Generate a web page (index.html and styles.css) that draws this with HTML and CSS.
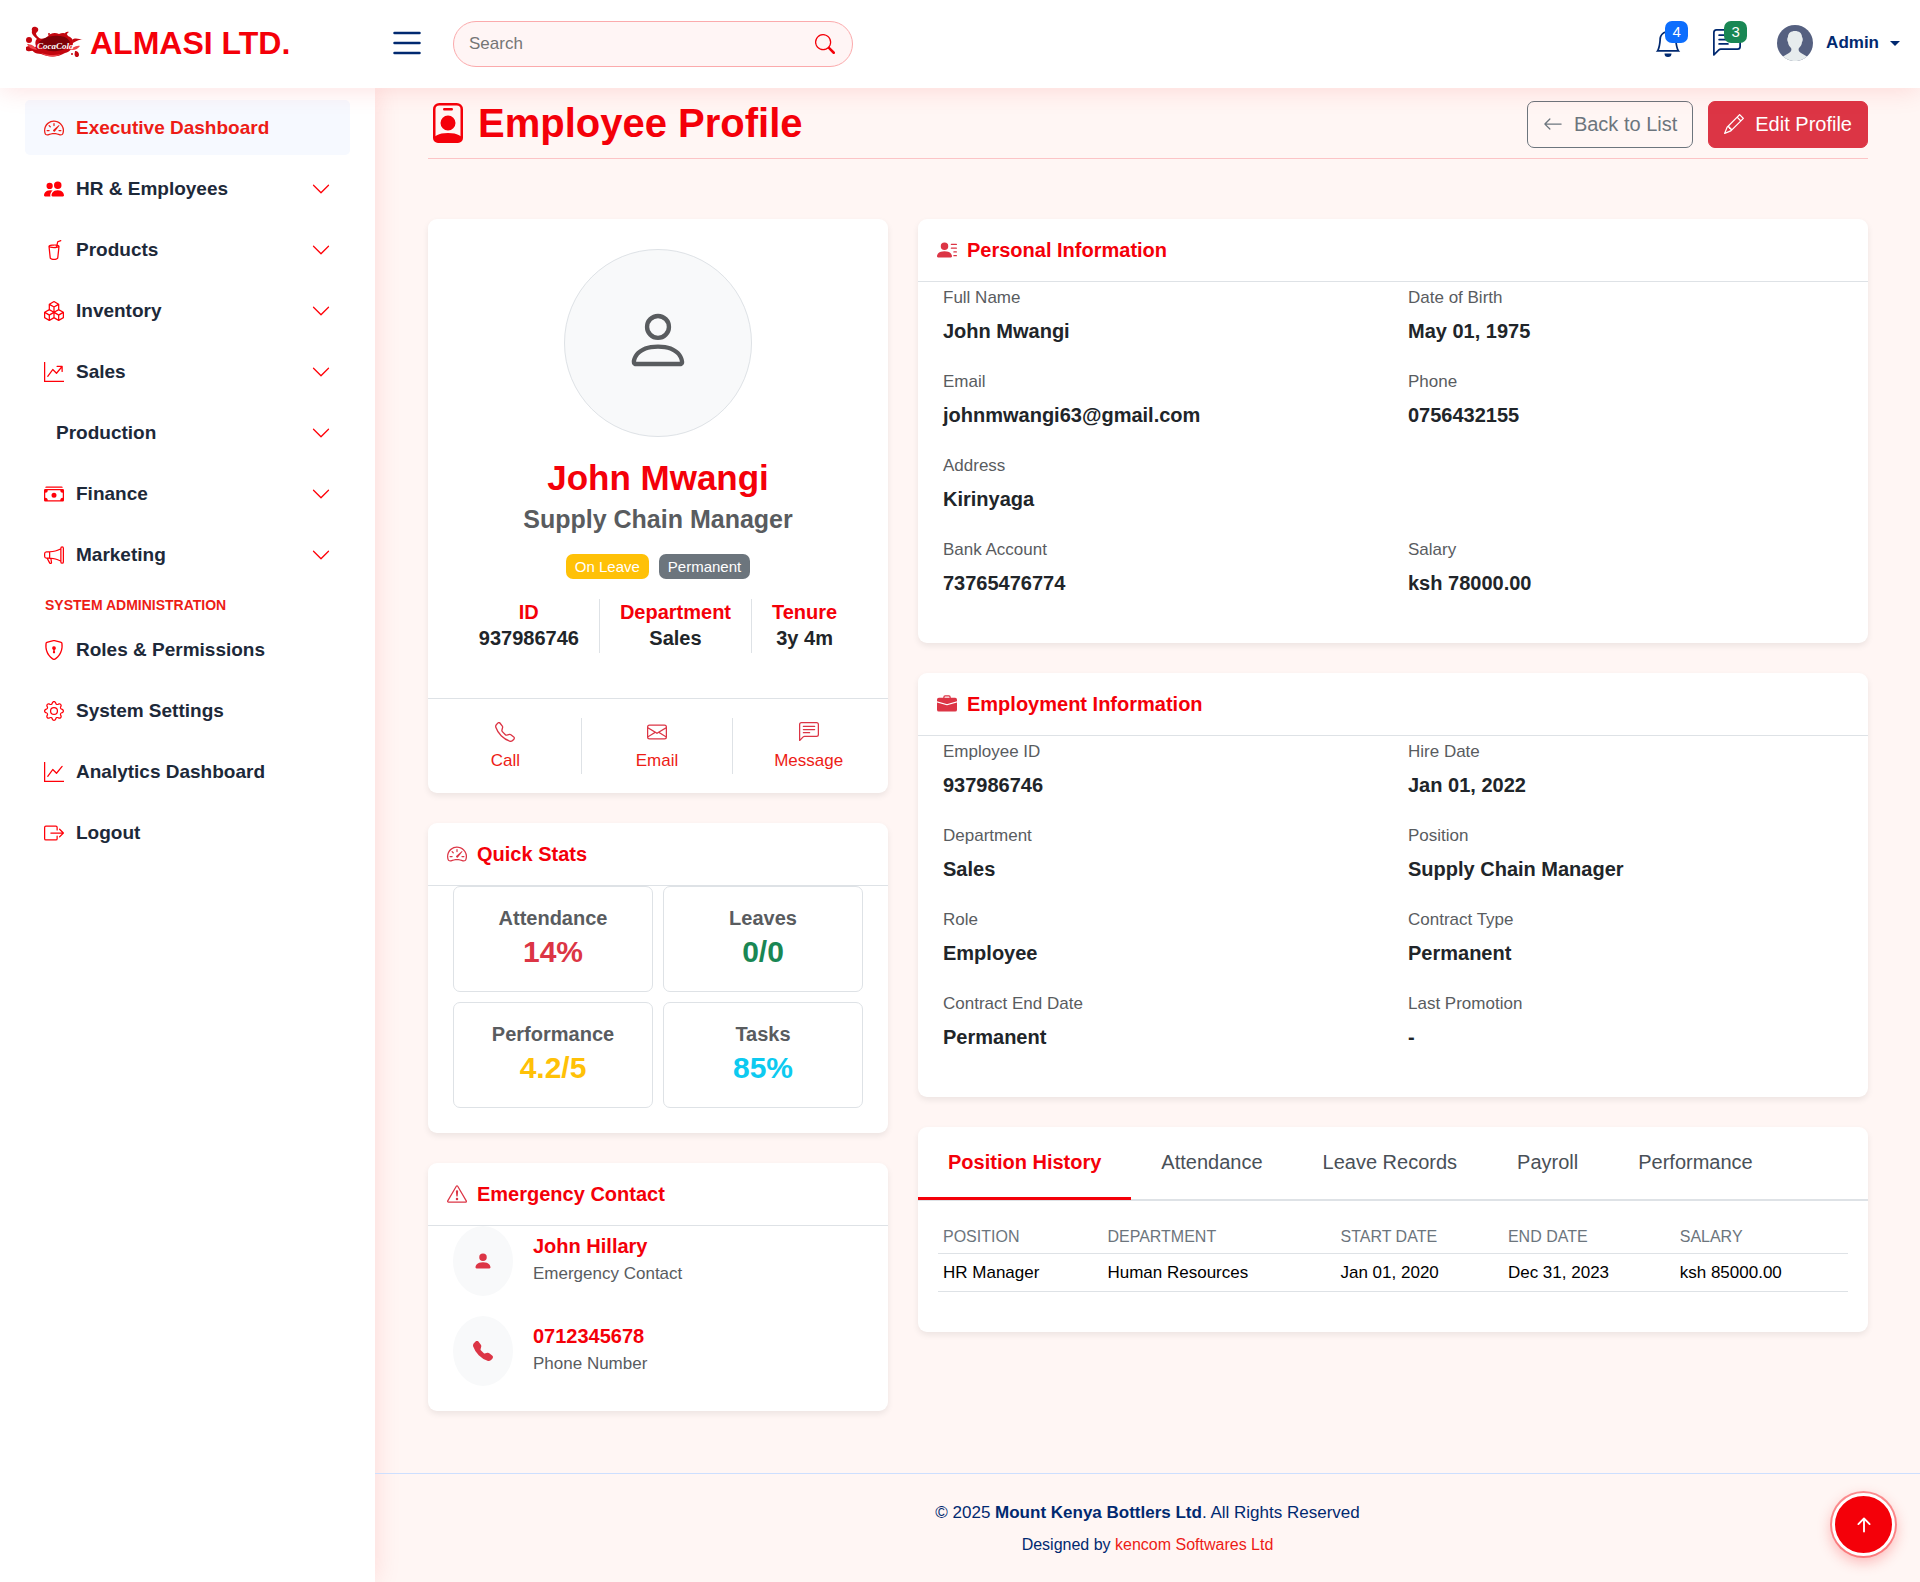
FILE: index.html
```html
<!DOCTYPE html>
<html lang="en">
<head>
<meta charset="utf-8">
<meta name="viewport" content="width=device-width, initial-scale=1">
<title>Employee Profile - Almasi Ltd.</title>
<link rel="stylesheet" href="styles.css">
</head>
<body>
<svg class="sprite" aria-hidden="true">
  <symbol id="speedometer" viewBox="0 0 16 16"><path d="M8 4a.5.5 0 0 1 .5.5V6a.5.5 0 0 1-1 0V4.5A.5.5 0 0 1 8 4M3.732 5.732a.5.5 0 0 1 .707 0l.915.914a.5.5 0 1 1-.708.708l-.914-.915a.5.5 0 0 1 0-.707M2 10a.5.5 0 0 1 .5-.5h1.586a.5.5 0 0 1 0 1H2.5A.5.5 0 0 1 2 10m9.5 0a.5.5 0 0 1 .5-.5h1.5a.5.5 0 0 1 0 1H12a.5.5 0 0 1-.5-.5m.754-4.246a.39.39 0 0 0-.527-.02L7.547 9.31a.91.91 0 1 0 1.302 1.258l3.434-4.297a.39.39 0 0 0-.029-.518z"/><path fill-rule="evenodd" d="M0 10a8 8 0 1 1 15.547 2.661c-.442 1.253-1.845 1.602-2.932 1.25C11.309 13.488 9.475 13 8 13c-1.474 0-3.31.488-4.615.911-1.087.352-2.49.003-2.932-1.25A8 8 0 0 1 0 10m8-7a7 7 0 0 0-6.603 9.329c.203.575.923.876 1.68.63C4.397 12.533 6.358 12 8 12s3.604.532 4.923.96c.757.245 1.477-.056 1.68-.631A7 7 0 0 0 8 3"/></symbol>
  <symbol id="people" viewBox="0 0 16 16"><path d="M7 14s-1 0-1-1 1-4 5-4 5 3 5 4-1 1-1 1zm4-6a3 3 0 1 0 0-6 3 3 0 0 0 0 6m-5.784 6A2.24 2.24 0 0 1 5 13c0-1.355.68-2.75 1.936-3.72A6.3 6.3 0 0 0 5 9c-4 0-5 3-5 4s1 1 1 1zM4.500 8a2.500 2.500 0 1 0 0-5 2.500 2.500 0 0 0 0 5"/></symbol>
  <symbol id="cup" viewBox="0 0 16 16"><path d="M13.902.334a.5.5 0 0 1-.28.65l-2.254.902-.4 1.927c.376.095.715.215.972.367.228.135.56.396.56.82q0 .069-.011.132l-.962 9.068a1.28 1.28 0 0 1-.524.93c-.488.34-1.494.87-3.01.87s-2.522-.53-3.01-.87a1.28 1.28 0 0 1-.524-.93L3.51 5.132A1 1 0 0 1 3.5 5c0-.424.332-.685.56-.82.262-.154.607-.276.99-.372C5.824 3.614 6.867 3.5 8 3.5c.712 0 1.389.045 1.985.127l.464-2.215a.5.5 0 0 1 .303-.356l2.5-1a.5.5 0 0 1 .65.278M9.768 4.607A14 14 0 0 0 8 4.5c-1.076 0-2.033.11-2.707.278A3.3 3.3 0 0 0 4.645 5c.146.073.362.15.648.222C5.967 5.39 6.924 5.5 8 5.5c.571 0 1.109-.03 1.588-.085zm.292 1.756C9.445 6.45 8.742 6.5 8 6.5c-1.133 0-2.176-.114-2.95-.308a6 6 0 0 1-.435-.127l.838 8.03c.013.121.06.186.102.215.357.249 1.168.69 2.438.69s2.081-.441 2.438-.69c.042-.029.09-.094.102-.215l.852-8.03a6 6 0 0 1-.435.127 9 9 0 0 1-.89.17zM11.354 5a3 3 0 0 0-.604-.21l-.099.445.055-.013c.286-.072.502-.149.648-.222"/></symbol>
  <symbol id="boxes" viewBox="0 0 16 16"><path d="M7.752.066a.5.5 0 0 1 .496 0l3.75 2.143a.5.5 0 0 1 .252.434v3.995l3.498 2A.5.5 0 0 1 16 9.07v4.286a.5.5 0 0 1-.252.434l-3.75 2.143a.5.5 0 0 1-.496 0l-3.502-2-3.502 2.001a.5.5 0 0 1-.496 0l-3.75-2.143A.5.5 0 0 1 0 13.357V9.071a.5.5 0 0 1 .252-.434L3.75 6.638V2.643a.5.5 0 0 1 .252-.434zM4.25 7.504 1.508 9.071l2.742 1.567 2.742-1.567zM7.5 9.933l-2.75 1.571v3.134l2.75-1.571zm1 3.134 2.75 1.571v-3.134L8.5 9.933zm.508-3.996 2.742 1.567 2.742-1.567-2.742-1.567zm2.242-2.433V3.504L8.5 5.076V8.21zM7.5 8.21V5.076L4.75 3.504v3.134zM5.258 2.643 8 4.21l2.742-1.567L8 1.076zM15 9.933l-2.75 1.571v3.134L15 13.067zM3.75 14.638v-3.134L1 9.933v3.134z"/></symbol>
  <symbol id="graph-arrow" viewBox="0 0 16 16"><path fill-rule="evenodd" d="M0 0h1v15h15v1H0zm10 3.5a.5.5 0 0 1 .5-.5h4a.5.5 0 0 1 .5.5v4a.5.5 0 0 1-1 0V4.9l-3.613 4.417a.5.5 0 0 1-.74.037L7.06 6.767l-3.656 5.027a.5.5 0 0 1-.808-.588l4-5.5a.5.5 0 0 1 .758-.06l2.609 2.61L13.445 4H10.5a.5.5 0 0 1-.5-.5"/></symbol>
  <symbol id="graph" viewBox="0 0 16 16"><path fill-rule="evenodd" d="M0 0h1v15h15v1H0zm14.817 3.113a.5.5 0 0 1 .07.704l-4.5 5.5a.5.5 0 0 1-.74.037L7.06 6.767l-3.656 5.027a.5.5 0 0 1-.808-.588l4-5.5a.5.5 0 0 1 .758-.06l2.609 2.61 4.15-5.073a.5.5 0 0 1 .704-.07"/></symbol>
  <symbol id="cash" viewBox="0 0 16 16"><path d="M1 3a1 1 0 0 1 1-1h12a1 1 0 0 1 1 1zm7 8a2 2 0 1 0 0-4 2 2 0 0 0 0 4"/><path d="M0 5a1 1 0 0 1 1-1h14a1 1 0 0 1 1 1v8a1 1 0 0 1-1 1H1a1 1 0 0 1-1-1zm3 0a2 2 0 0 1-2 2v4a2 2 0 0 1 2 2h10a2 2 0 0 1 2-2V7a2 2 0 0 1-2-2z"/></symbol>
  <symbol id="megaphone" viewBox="0 0 16 16"><path d="M13 2.5a1.5 1.5 0 0 1 3 0v11a1.5 1.5 0 0 1-3 0v-.214c-2.162-1.241-4.49-1.843-6.912-2.083l.405 2.712A1 1 0 0 1 5.51 15.1h-.548a1 1 0 0 1-.916-.599l-1.85-3.49-.202-.003A2.014 2.014 0 0 1 0 9V7a2.02 2.02 0 0 1 1.992-2.013 75 75 0 0 0 2.483-.075c3.043-.154 6.148-.849 8.525-2.199zm1 0v11a.5.5 0 0 0 1 0v-11a.5.5 0 0 0-1 0m-1 1.35c-2.344 1.205-5.209 1.842-8 2.033v4.233q.27.015.537.036c2.568.189 5.093.744 7.463 1.993zm-9 6.215v-4.13a95 95 0 0 1-1.992.052A1.02 1.02 0 0 0 1 7v2c0 .55.448 1.002 1.006 1.009A61 61 0 0 1 4 10.065m-.657.975 1.609 3.037.01.024h.548l-.002-.014-.443-2.966a68 68 0 0 0-1.722-.082z"/></symbol>
  <symbol id="shield" viewBox="0 0 16 16"><path d="M5.338 1.59a61 61 0 0 0-2.837.856.48.48 0 0 0-.328.39c-.554 4.157.726 7.19 2.253 9.188a10.7 10.7 0 0 0 2.287 2.233c.346.244.652.42.893.533q.18.085.293.118a1 1 0 0 0 .101.025 1 1 0 0 0 .1-.025q.114-.034.294-.118c.24-.113.547-.29.893-.533a10.7 10.7 0 0 0 2.287-2.233c1.527-1.997 2.807-5.031 2.253-9.188a.48.48 0 0 0-.328-.39c-.651-.213-1.75-.56-2.837-.855C9.552 1.29 8.531 1.067 8 1.067c-.53 0-1.552.223-2.662.524zM5.072.56C6.157.265 7.31 0 8 0s1.843.265 2.928.56c1.11.3 2.229.655 2.887.87a1.54 1.54 0 0 1 1.044 1.262c.596 4.477-.787 7.795-2.465 9.99a11.8 11.8 0 0 1-2.517 2.453 7 7 0 0 1-1.048.625c-.28.132-.581.24-.829.24s-.548-.108-.829-.24a7 7 0 0 1-1.048-.625 11.8 11.8 0 0 1-2.517-2.453C1.928 10.487.545 7.169 1.141 2.692A1.54 1.54 0 0 1 2.185 1.43 63 63 0 0 1 5.072.56"/><path d="M9.5 6.5a1.5 1.5 0 0 1-1 1.415l.385 1.99a.5.5 0 0 1-.491.595h-.788a.5.5 0 0 1-.49-.595l.384-1.99a1.5 1.5 0 1 1 2-1.415"/></symbol>
  <symbol id="gear" viewBox="0 0 16 16"><path d="M8 4.754a3.246 3.246 0 1 0 0 6.492 3.246 3.246 0 0 0 0-6.492M5.754 8a2.246 2.246 0 1 1 4.492 0 2.246 2.246 0 0 1-4.492 0"/><path d="M9.796 1.343c-.527-1.79-3.065-1.79-3.592 0l-.094.319a.873.873 0 0 1-1.255.52l-.292-.16c-1.64-.892-3.433.902-2.54 2.541l.159.292a.873.873 0 0 1-.52 1.255l-.319.094c-1.79.527-1.79 3.065 0 3.592l.319.094a.873.873 0 0 1 .52 1.255l-.16.292c-.892 1.64.901 3.434 2.541 2.54l.292-.159a.873.873 0 0 1 1.255.52l.094.319c.527 1.79 3.065 1.79 3.592 0l.094-.319a.873.873 0 0 1 1.255-.52l.292.16c1.64.893 3.434-.902 2.54-2.541l-.159-.292a.873.873 0 0 1 .52-1.255l.319-.094c1.79-.527 1.79-3.065 0-3.592l-.319-.094a.873.873 0 0 1-.52-1.255l.16-.292c.893-1.64-.902-3.433-2.541-2.54l-.292.159a.873.873 0 0 1-1.255-.52zm-2.633.283c.246-.835 1.428-.835 1.674 0l.094.319a1.873 1.873 0 0 0 2.693 1.115l.291-.16c.764-.415 1.6.42 1.184 1.185l-.159.292a1.873 1.873 0 0 0 1.116 2.692l.318.094c.835.246.835 1.428 0 1.674l-.319.094a1.873 1.873 0 0 0-1.115 2.693l.16.291c.415.764-.42 1.6-1.185 1.184l-.291-.159a1.873 1.873 0 0 0-2.693 1.116l-.094.318c-.246.835-1.428.835-1.674 0l-.094-.319a1.873 1.873 0 0 0-2.692-1.115l-.292.16c-.764.415-1.6-.42-1.184-1.185l.159-.291A1.873 1.873 0 0 0 1.945 8.93l-.319-.094c-.835-.246-.835-1.428 0-1.674l.319-.094A1.873 1.873 0 0 0 3.06 4.377l-.16-.292c-.415-.764.42-1.6 1.185-1.184l.292.159a1.873 1.873 0 0 0 2.692-1.115z"/></symbol>
  <symbol id="logout" viewBox="0 0 16 16"><path fill-rule="evenodd" d="M10 12.5a.5.5 0 0 1-.5.5h-8a.5.5 0 0 1-.5-.5v-9a.5.5 0 0 1 .5-.5h8a.5.5 0 0 1 .5.5v2a.5.5 0 0 0 1 0v-2A1.5 1.5 0 0 0 9.5 2h-8A1.5 1.5 0 0 0 0 3.5v9A1.5 1.5 0 0 0 1.5 14h8a1.5 1.5 0 0 0 1.5-1.5v-2a.5.5 0 0 0-1 0z"/><path fill-rule="evenodd" d="M15.854 8.354a.5.5 0 0 0 0-.708l-3-3a.5.5 0 0 0-.708.708L14.293 7.5H5.5a.5.5 0 0 0 0 1h8.793l-2.147 2.146a.5.5 0 0 0 .708.708z"/></symbol>
  <symbol id="chevron" viewBox="0 0 16 16"><path fill-rule="evenodd" d="M1.646 4.646a.5.5 0 0 1 .708 0L8 10.293l5.646-5.647a.5.5 0 0 1 .708.708l-6 6a.5.5 0 0 1-.708 0l-6-6a.5.5 0 0 1 0-.708"/></symbol>
  <symbol id="list" viewBox="0 0 16 16"><path fill-rule="evenodd" d="M2.5 12a.5.5 0 0 1 .5-.5h10a.5.5 0 0 1 0 1H3a.5.5 0 0 1-.5-.5m0-4a.5.5 0 0 1 .5-.5h10a.5.5 0 0 1 0 1H3a.5.5 0 0 1-.5-.5m0-4a.5.5 0 0 1 .5-.5h10a.5.5 0 0 1 0 1H3a.5.5 0 0 1-.5-.5"/></symbol>
  <symbol id="search" viewBox="0 0 16 16"><path d="M11.742 10.344a6.5 6.5 0 1 0-1.397 1.398h-.001q.044.06.098.115l3.85 3.85a1 1 0 0 0 1.415-1.414l-3.85-3.85a1 1 0 0 0-.115-.1zM12 6.5a5.5 5.5 0 1 1-11 0 5.5 5.5 0 0 1 11 0"/></symbol>
  <symbol id="bell" viewBox="0 0 16 16"><path d="M8 16a2 2 0 0 0 2-2H6a2 2 0 0 0 2 2M8 1.918l-.797.161A4 4 0 0 0 4 6c0 .628-.134 2.197-.459 3.742-.16.767-.376 1.566-.663 2.258h10.244c-.287-.692-.502-1.49-.663-2.258C12.134 8.197 12 6.628 12 6a4 4 0 0 0-3.203-3.92zM14.22 12c.223.447.481.801.78 1H1c.299-.199.557-.553.78-1C2.68 10.2 3 6.88 3 6c0-2.42 1.72-4.44 4.005-4.901a1 1 0 1 1 1.99 0A5 5 0 0 1 13 6c0 .88.32 4.2 1.22 6"/></symbol>
  <symbol id="chat" viewBox="0 0 16 16"><path d="M14 1a1 1 0 0 1 1 1v8a1 1 0 0 1-1 1H4.414A2 2 0 0 0 3 11.586l-2 2V2a1 1 0 0 1 1-1zM2 0a2 2 0 0 0-2 2v12.793a.5.5 0 0 0 .854.353l2.853-2.853A1 1 0 0 1 4.414 12H14a2 2 0 0 0 2-2V2a2 2 0 0 0-2-2z"/><path d="M3 3.5a.5.5 0 0 1 .5-.5h9a.5.5 0 0 1 0 1h-9a.5.5 0 0 1-.5-.5M3 6a.5.5 0 0 1 .5-.5h9a.5.5 0 0 1 0 1h-9A.5.5 0 0 1 3 6m0 2.500a.5.5 0 0 1 .5-.5h5a.5.5 0 0 1 0 1h-5a.5.5 0 0 1-.5-.5"/></symbol>
  <symbol id="badge-person" viewBox="0 0 16 16"><path d="M6.5 2a.5.5 0 0 0 0 1h3a.5.5 0 0 0 0-1zM11 8a3 3 0 1 1-6 0 3 3 0 0 1 6 0"/><path d="M4.5 0A2.500 2.500 0 0 0 2 2.500V14a2 2 0 0 0 2 2h8a2 2 0 0 0 2-2V2.500A2.500 2.500 0 0 0 11.500 0zM3 2.500A1.500 1.500 0 0 1 4.500 1h7A1.500 1.500 0 0 1 13 2.500v10.795a4.2 4.2 0 0 0-.776-.492C11.392 12.387 10.063 12 8 12s-3.392.387-4.224.803a4.2 4.2 0 0 0-.776.492z"/></symbol>
  <symbol id="arrow-left" viewBox="0 0 16 16"><path fill-rule="evenodd" d="M15 8a.5.5 0 0 0-.5-.5H2.707l3.147-3.146a.5.5 0 1 0-.708-.708l-4 4a.5.5 0 0 0 0 .708l4 4a.5.5 0 0 0 .708-.708L2.707 8.5H14.5A.5.5 0 0 0 15 8"/></symbol>
  <symbol id="pencil" viewBox="0 0 16 16"><path d="M12.146.146a.5.5 0 0 1 .708 0l3 3a.5.5 0 0 1 0 .708l-10 10a.5.5 0 0 1-.168.11l-5 2a.5.5 0 0 1-.65-.65l2-5a.5.5 0 0 1 .11-.168zM11.207 2.5 13.5 4.793 14.793 3.5 12.5 1.207zm1.586 3L10.5 3.207 4 9.707V10h.5a.5.5 0 0 1 .5.5v.5h.5a.5.5 0 0 1 .5.5v.5h.293zm-9.761 5.175-.106.106-1.528 3.821 3.821-1.528.106-.106A.5.5 0 0 1 5 12.5V12h-.5a.5.5 0 0 1-.5-.5V11h-.5a.5.5 0 0 1-.468-.325"/></symbol>
  <symbol id="phone" viewBox="0 0 16 16"><path d="M3.654 1.328a.678.678 0 0 0-1.015-.063L1.605 2.3c-.483.484-.661 1.169-.45 1.77a17.6 17.6 0 0 0 4.168 6.608 17.6 17.6 0 0 0 6.608 4.168c.601.211 1.286.033 1.77-.45l1.034-1.034a.678.678 0 0 0-.063-1.015l-2.307-1.794a.68.68 0 0 0-.58-.122l-2.19.547a1.75 1.75 0 0 1-1.657-.459L5.482 8.062a1.75 1.75 0 0 1-.46-1.657l.548-2.19a.68.68 0 0 0-.122-.58zM1.884.511a1.745 1.745 0 0 1 2.612.163L6.29 2.98c.329.423.445.974.315 1.494l-.547 2.19a.68.68 0 0 0 .178.643l2.457 2.457a.68.68 0 0 0 .644.178l2.189-.547a1.75 1.75 0 0 1 1.494.315l2.306 1.794c.829.645.905 1.87.163 2.611l-1.034 1.034c-.74.74-1.846 1.065-2.877.702a18.6 18.6 0 0 1-7.01-4.42 18.6 18.6 0 0 1-4.42-7.009c-.362-1.03-.037-2.137.703-2.877z"/></symbol>
  <symbol id="phone-fill" viewBox="0 0 16 16"><path d="M1.885.511a1.745 1.745 0 0 1 2.61.163L6.29 2.98c.329.423.445.974.315 1.494l-.547 2.19a.68.68 0 0 0 .178.643l2.457 2.457a.68.68 0 0 0 .644.178l2.189-.547a1.75 1.75 0 0 1 1.494.315l2.306 1.794c.829.645.905 1.87.163 2.611l-1.034 1.034c-.74.74-1.846 1.065-2.877.702a18.6 18.6 0 0 1-7.01-4.42 18.6 18.6 0 0 1-4.42-7.009c-.362-1.03-.037-2.137.703-2.877z"/></symbol>
  <symbol id="envelope" viewBox="0 0 16 16"><path d="M0 4a2 2 0 0 1 2-2h12a2 2 0 0 1 2 2v8a2 2 0 0 1-2 2H2a2 2 0 0 1-2-2zm2-1a1 1 0 0 0-1 1v.217l7 4.2 7-4.2V4a1 1 0 0 0-1-1zm13 2.383-4.708 2.825L15 11.105zm-.034 6.876-5.64-3.471L8 9.583l-1.326-.795-5.64 3.47A1 1 0 0 0 2 13h12a1 1 0 0 0 .966-.741M1 11.105l4.708-2.897L1 5.383z"/></symbol>
  <symbol id="warning" viewBox="0 0 16 16"><path d="M7.938 2.016A.13.13 0 0 1 8.002 2a.13.13 0 0 1 .063.016.15.15 0 0 1 .054.057l6.857 11.667c.036.06.035.124.002.183a.2.2 0 0 1-.054.06.1.1 0 0 1-.066.017H1.146a.1.1 0 0 1-.066-.017.2.2 0 0 1-.054-.06.18.18 0 0 1 .002-.183L7.884 2.073a.15.15 0 0 1 .054-.057m1.044-.45a1.13 1.13 0 0 0-1.96 0L.165 13.233c-.457.778.091 1.767.98 1.767h13.713c.889 0 1.438-.99.98-1.767z"/><path d="M7.002 12a1 1 0 1 1 2 0 1 1 0 0 1-2 0M7.1 5.995a.905.905 0 1 1 1.8 0l-.35 3.507a.552.552 0 0 1-1.1 0z"/></symbol>
  <symbol id="person" viewBox="0 0 16 16"><path d="M8 8a3 3 0 1 0 0-6 3 3 0 0 0 0 6m2-3a2 2 0 1 1-4 0 2 2 0 0 1 4 0m4 8c0 1-1 1-1 1H3s-1 0-1-1 1-4 6-4 6 3 6 4m-1-.004c-.001-.246-.154-.986-.832-1.664C11.516 10.68 10.289 10 8 10s-3.516.68-4.168 1.332c-.678.678-.83 1.418-.832 1.664z"/></symbol>
  <symbol id="person-fill" viewBox="0 0 16 16"><path d="M3 14s-1 0-1-1 1-4 6-4 6 3 6 4-1 1-1 1zm5-6a3 3 0 1 0 0-6 3 3 0 0 0 0 6"/></symbol>
  <symbol id="person-lines" viewBox="0 0 16 16"><path d="M6 8a3 3 0 1 0 0-6 3 3 0 0 0 0 6m-5 6s-1 0-1-1 1-4 6-4 6 3 6 4-1 1-1 1zM11 3.5a.5.5 0 0 1 .5-.5h4a.5.5 0 0 1 0 1h-4a.5.5 0 0 1-.5-.5m.5 2.500a.5.5 0 0 0 0 1h4a.5.5 0 0 0 0-1zm2 3a.5.5 0 0 0 0 1h2a.5.5 0 0 0 0-1zm0 3a.5.5 0 0 0 0 1h2a.5.5 0 0 0 0-1z"/></symbol>
  <symbol id="briefcase" viewBox="0 0 16 16"><path d="M6.500 1A1.500 1.500 0 0 0 5 2.500V3H1.500A1.500 1.500 0 0 0 0 4.500v1.384l7.614 2.03a1.500 1.500 0 0 0 .772 0L16 5.884V4.500A1.500 1.500 0 0 0 14.500 3H11v-.5A1.500 1.500 0 0 0 9.500 1zm0 1h3a.5.5 0 0 1 .5.5V3H6v-.5a.5.5 0 0 1 .5-.5"/><path d="M0 12.500A1.500 1.500 0 0 0 1.500 14h13a1.500 1.500 0 0 0 1.500-1.500V6.850L8.129 8.947a.5.5 0 0 1-.258 0L0 6.850z"/></symbol>
  <symbol id="arrow-up" viewBox="0 0 16 16"><path fill-rule="evenodd" d="M8 12a.5.5 0 0 0 .5-.5V5.707l2.146 2.147a.5.5 0 0 0 .708-.708l-3-3a.5.5 0 0 0-.708 0l-3 3a.5.5 0 1 0 .708.708L7.5 5.707V11.5a.5.5 0 0 0 .5.5"/></symbol>
</svg>

<header class="topbar">
  <div class="brand-area">
    <a class="brand" href="#">
      <svg class="logo" viewBox="0 0 58 34" role="img" aria-label="Coca-Cola">
        <g fill="#c4060f">
          <path d="M13 12c3 1 6 1 9-1 3-4 8-5 12-3 4-2 8-1 9 2 3 1 5 3 5 6 0 6-3 10-8 11-8 5-17 4-24 1-6 0-9-3-10-6 3 1 4 0 5-2-1-3-1-6 2-8z"/>
          <path d="M12 13C9 10 6 8 7 5c-1-3 1-5 4-4s3 4 0 6c0 3 3 4 4 6zM1 21c3-2 6-1 11 1v2c-5 0-8 3-11 0zM47 14c3-3 7-1 11 0-4-1-6 1-10 3zM50 25c3 0 4 2 4 4s-3 3-4 1 0-3 0-5zM39 9c1-3 3-4 5-3-2 1-2 2-3 4z"/>
          <circle cx="4" cy="14" r="3"/><circle cx="24" cy="8" r="1"/><circle cx="47" cy="28" r="1"/>
        </g>
        <path fill="#7d0208" d="M14 16c6-5 13-7 20-6 5 0 9 2 11 6-1 5-5 8-13 9-8 1-16-1-18-9z"/>
        <path fill="#f0474d" d="M2 18c4 0 8 2 10 6-5-1-8-2-10-6zM44 23c4 0 6-4 11-3-3 4-7 5-11 3zM16 27c6 2 13 3 20 1-7 4-15 3-20-1z"/>
        <text class="logo-text" x="12" y="23">CocaCola</text>
      </svg>
      <span>ALMASI LTD.</span>
    </a>
  </div>
  <button class="icon-button menu-button" type="button" aria-label="Toggle sidebar"><svg class="icon"><use href="#list"/></svg></button>
  <form class="search" role="search">
    <input type="text" placeholder="Search" aria-label="Search">
    <button class="icon-button" type="submit" aria-label="Submit search"><svg class="icon icon-20"><use href="#search"/></svg></button>
  </form>
  <div class="tools">
    <a class="tool" href="#" aria-label="Notifications"><svg class="icon"><use href="#bell"/></svg><span class="count count-blue">4</span></a>
    <a class="tool" href="#" aria-label="Messages"><svg class="icon"><use href="#chat"/></svg><span class="count count-green">3</span></a>
    <button class="account" type="button">
      <svg class="avatar" viewBox="0 0 36 36" aria-hidden="true">
        <circle cx="18" cy="18" r="18" fill="#556080"/>
        <path fill="#e7eced" d="M11 12c0-4 3-6 7-6s7 2 7 6c1 1 1 4 0 5 0 3-2 5-3 6-1 2 0 4 2 5l6 3.500A18 18 0 0 1 6 31.500L12 28c2-1 3-3 2-5-1-1-3-3-3-6-1-1-1-4 0-5z"/>
      </svg>
      <span>Admin</span><span class="caret"></span>
    </button>
  </div>
</header>

<div class="layout">
  <nav class="sidebar" aria-label="Main">
    <ul class="menu">
      <li><a class="menu-link active" href="#"><svg class="icon icon-20"><use href="#speedometer"/></svg><span>Executive Dashboard</span></a></li>
      <li><a class="menu-link" href="#"><svg class="icon icon-20"><use href="#people"/></svg><span>HR &amp; Employees</span><svg class="icon icon-20 chevron"><use href="#chevron"/></svg></a></li>
      <li><a class="menu-link" href="#"><svg class="icon icon-20"><use href="#cup"/></svg><span>Products</span><svg class="icon icon-20 chevron"><use href="#chevron"/></svg></a></li>
      <li><a class="menu-link" href="#"><svg class="icon icon-20"><use href="#boxes"/></svg><span>Inventory</span><svg class="icon icon-20 chevron"><use href="#chevron"/></svg></a></li>
      <li><a class="menu-link" href="#"><svg class="icon icon-20"><use href="#graph-arrow"/></svg><span>Sales</span><svg class="icon icon-20 chevron"><use href="#chevron"/></svg></a></li>
      <li><a class="menu-link" href="#"><span class="no-icon"></span><span>Production</span><svg class="icon icon-20 chevron"><use href="#chevron"/></svg></a></li>
      <li><a class="menu-link" href="#"><svg class="icon icon-20"><use href="#cash"/></svg><span>Finance</span><svg class="icon icon-20 chevron"><use href="#chevron"/></svg></a></li>
      <li><a class="menu-link" href="#"><svg class="icon icon-20"><use href="#megaphone"/></svg><span>Marketing</span><svg class="icon icon-20 chevron"><use href="#chevron"/></svg></a></li>
      <li class="menu-heading">SYSTEM ADMINISTRATION</li>
      <li><a class="menu-link" href="#"><svg class="icon icon-20"><use href="#shield"/></svg><span>Roles &amp; Permissions</span></a></li>
      <li><a class="menu-link" href="#"><svg class="icon icon-20"><use href="#gear"/></svg><span>System Settings</span></a></li>
      <li><a class="menu-link" href="#"><svg class="icon icon-20"><use href="#graph"/></svg><span>Analytics Dashboard</span></a></li>
      <li><a class="menu-link" href="#"><svg class="icon icon-20"><use href="#logout"/></svg><span>Logout</span></a></li>
    </ul>
  </nav>

  <div class="page">
    <main class="main">
      <div class="page-head">
        <h1 class="page-title"><svg class="icon"><use href="#badge-person"/></svg>Employee Profile</h1>
        <div class="page-actions">
          <a class="btn btn-outline" href="#"><svg class="icon icon-20"><use href="#arrow-left"/></svg>Back to List</a>
          <a class="btn btn-danger" href="#"><svg class="icon icon-20"><use href="#pencil"/></svg>Edit Profile</a>
        </div>
      </div>

      <div class="columns">
        <div class="stack">
          <section class="card">
            <div class="profile">
              <div class="portrait"><svg class="icon"><use href="#person"/></svg></div>
              <h2 class="profile-name">John Mwangi</h2>
              <p class="profile-role">Supply Chain Manager</p>
              <div class="tags"><span class="tag tag-warning">On Leave</span><span class="tag tag-secondary">Permanent</span></div>
              <dl class="facts">
                <div><dt>ID</dt><dd>937986746</dd></div>
                <div><dt>Department</dt><dd>Sales</dd></div>
                <div><dt>Tenure</dt><dd>3y 4m</dd></div>
              </dl>
            </div>
            <div class="contact-actions">
              <a href="#"><svg class="icon icon-20"><use href="#phone"/></svg>Call</a>
              <a href="#"><svg class="icon icon-20"><use href="#envelope"/></svg>Email</a>
              <a href="#"><svg class="icon icon-20"><use href="#chat"/></svg>Message</a>
            </div>
          </section>

          <section class="card">
            <h2 class="card-title"><svg class="icon icon-20"><use href="#speedometer"/></svg>Quick Stats</h2>
            <div class="card-body stats">
              <div class="stat"><h3>Attendance</h3><p class="text-danger">14%</p></div>
              <div class="stat"><h3>Leaves</h3><p class="text-success">0/0</p></div>
              <div class="stat"><h3>Performance</h3><p class="text-warning">4.2/5</p></div>
              <div class="stat"><h3>Tasks</h3><p class="text-info">85%</p></div>
            </div>
          </section>

          <section class="card">
            <h2 class="card-title"><svg class="icon icon-20"><use href="#warning"/></svg>Emergency Contact</h2>
            <div class="card-body contacts">
              <div class="contact">
                <span class="contact-icon"><svg class="icon icon-20"><use href="#person-fill"/></svg></span>
                <div class="contact-text"><h3>John Hillary</h3><p>Emergency Contact</p></div>
              </div>
              <div class="contact">
                <span class="contact-icon"><svg class="icon icon-20"><use href="#phone-fill"/></svg></span>
                <div class="contact-text"><h3>0712345678</h3><p>Phone Number</p></div>
              </div>
            </div>
          </section>
        </div>

        <div class="stack">
          <section class="card">
            <h2 class="card-title"><svg class="icon icon-20"><use href="#person-lines"/></svg>Personal Information</h2>
            <dl class="card-body fields">
              <div><dt>Full Name</dt><dd>John Mwangi</dd></div>
              <div><dt>Date of Birth</dt><dd>May 01, 1975</dd></div>
              <div><dt>Email</dt><dd>johnmwangi63@gmail.com</dd></div>
              <div><dt>Phone</dt><dd>0756432155</dd></div>
              <div class="wide"><dt>Address</dt><dd>Kirinyaga</dd></div>
              <div><dt>Bank Account</dt><dd>73765476774</dd></div>
              <div><dt>Salary</dt><dd>ksh 78000.00</dd></div>
            </dl>
          </section>

          <section class="card">
            <h2 class="card-title"><svg class="icon icon-20"><use href="#briefcase"/></svg>Employment Information</h2>
            <dl class="card-body fields">
              <div><dt>Employee ID</dt><dd>937986746</dd></div>
              <div><dt>Hire Date</dt><dd>Jan 01, 2022</dd></div>
              <div><dt>Department</dt><dd>Sales</dd></div>
              <div><dt>Position</dt><dd>Supply Chain Manager</dd></div>
              <div><dt>Role</dt><dd>Employee</dd></div>
              <div><dt>Contract Type</dt><dd>Permanent</dd></div>
              <div><dt>Contract End Date</dt><dd>Permanent</dd></div>
              <div><dt>Last Promotion</dt><dd>-</dd></div>
            </dl>
          </section>

          <section class="card">
            <div class="tabs" role="tablist">
              <button class="tab active" type="button" role="tab" aria-selected="true">Position History</button>
              <button class="tab" type="button" role="tab" aria-selected="false">Attendance</button>
              <button class="tab" type="button" role="tab" aria-selected="false">Leave Records</button>
              <button class="tab" type="button" role="tab" aria-selected="false">Payroll</button>
              <button class="tab" type="button" role="tab" aria-selected="false">Performance</button>
            </div>
            <div class="tab-panel" role="tabpanel">
              <table class="history">
                <thead><tr><th>POSITION</th><th>DEPARTMENT</th><th>START DATE</th><th>END DATE</th><th>SALARY</th></tr></thead>
                <tbody><tr><td>HR Manager</td><td>Human Resources</td><td>Jan 01, 2020</td><td>Dec 31, 2023</td><td>ksh 85000.00</td></tr></tbody>
              </table>
            </div>
          </section>
        </div>
      </div>
    </main>

    <footer class="footer">
      <p class="copyright">© 2025 <strong>Mount Kenya Bottlers Ltd</strong>. All Rights Reserved</p>
      <p class="credits">Designed by <a href="#">kencom Softwares Ltd</a></p>
    </footer>
  </div>
</div>

<a class="back-to-top" href="#" aria-label="Back to top"><svg class="icon"><use href="#arrow-up"/></svg></a>
</body>
</html>
```

FILE: styles.css
```css
:root {
  --red: #f40009;
  --link: #ed1c16;
  --danger: #dc3545;
  --navy: #012970;
  --ink: #212529;
  --muted: #595c5f;
  --line: #dee2e6;
  --tint: #fff5f5;
}

* { box-sizing: border-box; }

body {
  margin: 0;
  min-height: 100vh;
  display: flex;
  flex-direction: column;
  background: #fff6f4;
  color: var(--ink);
  font-family: "Liberation Sans", Arial, sans-serif;
  font-size: 20px;
  line-height: 30px;
}

h1, h2, h3, p, ul, dl, dd { margin: 0; padding: 0; }
a { color: var(--link); text-decoration: none; }
button, input { font: inherit; }

.sprite { position: absolute; width: 0; height: 0; }
.icon { display: block; flex: none; fill: currentColor; }
.icon-20 { width: 20px; height: 20px; }
.icon-button { padding: 0; border: 0; background: none; cursor: pointer; }

/* Top bar */
.topbar {
  position: sticky;
  top: 0;
  z-index: 2;
  height: 88px;
  padding-right: 20px;
  display: flex;
  align-items: center;
  background: #fff;
  box-shadow: 0 2px 25px rgba(244, 0, 9, 0.12);
}
.brand-area { width: 387px; padding: 0 0 2px 25px; }
.brand {
  display: flex;
  align-items: center;
  gap: 7px;
  color: var(--red);
  font-size: 32px;
  font-weight: bold;
  line-height: 40px;
}
.logo { width: 58px; height: 34px; }
.logo-text {
  font: italic bold 9px "Liberation Serif", serif;
  fill: #fff;
}
.menu-button { padding-bottom: 2px; color: var(--navy); }
.menu-button .icon { width: 40px; height: 40px; }

.search {
  width: 400px;
  height: 46px;
  margin-left: 26px;
  padding: 0 17px 0 15px;
  display: flex;
  align-items: center;
  border: 1px solid #fbaaac;
  border-radius: 23px;
  background: var(--tint);
}
.search input {
  flex: 1;
  min-width: 0;
  padding: 0;
  border: 0;
  outline: 0;
  background: none;
  font-size: 17px;
}
.search input::placeholder { color: #757575; opacity: 1; }
.search .icon-button { color: var(--red); }

.tools {
  margin-left: auto;
  padding-bottom: 2px;
  display: flex;
  align-items: center;
  gap: 31px;
}
.tool { position: relative; color: var(--navy); }
.tool .icon { width: 28px; height: 28px; }
.count {
  position: absolute;
  top: -8px;
  left: 11px;
  min-width: 23px;
  height: 22px;
  border-radius: 7px;
  color: #fff;
  font-size: 15px;
  line-height: 22px;
  text-align: center;
}
.count-blue { background: #0d6efd; }
.count-green { background: #198754; }
.account {
  display: flex;
  align-items: center;
  padding: 0;
  margin-left: 5px;
  border: 0;
  background: none;
  color: var(--navy);
  font-size: 17px;
  font-weight: bold;
  cursor: pointer;
}
.avatar { width: 36px; height: 36px; margin-right: 13px; }
.caret {
  margin-left: 11px;
  border: 5px solid transparent;
  border-top-color: currentColor;
  border-bottom: 0;
}

/* Sidebar */
.layout { flex: 1; display: flex; }
.sidebar {
  flex: none;
  width: 375px;
  padding: 12px 25px;
  background: #fff;
  box-shadow: 0 0 25px rgba(244, 0, 9, 0.12);
}
.menu {
  display: flex;
  flex-direction: column;
  gap: 6px;
  list-style: none;
}
.menu-link {
  height: 55px;
  padding: 0 19px;
  display: flex;
  align-items: center;
  border-radius: 5px;
  color: #1d2939;
  font-size: 19px;
  font-weight: bold;
}
.menu-link .icon { margin-right: 12px; color: #ff0008; }
.menu-link .chevron { margin: 0 0 0 auto; }
.menu-link.active { background: #f6f9ff; color: var(--link); }
.menu-link.active .icon { color: var(--link); }
.no-icon { width: 12px; }
.menu-heading {
  padding: 6px 20px 0;
  color: var(--link);
  font-size: 14px;
  font-weight: bold;
  line-height: 22px;
}

/* Page head */
.page {
  flex: 1;
  min-width: 0;
  display: flex;
  flex-direction: column;
}
.main { flex: 1; padding: 13px 52px 62px 53px; }
.page-head {
  display: flex;
  align-items: center;
  justify-content: space-between;
  margin-bottom: 60px;
  padding-bottom: 10px;
  border-bottom: 1px solid #fcc4c6;
}
.page-title {
  display: flex;
  align-items: center;
  gap: 10px;
  padding-bottom: 3px;
  color: var(--red);
  font-size: 40px;
  line-height: 44px;
}
.page-title .icon { width: 40px; height: 40px; }
.page-actions { display: flex; gap: 15px; }
.btn {
  display: flex;
  align-items: center;
  gap: 11px;
  padding: 7px 15px 8px;
  border: 1px solid;
  border-radius: 7px;
}
.btn-outline { border-color: #6c757d; color: #6c757d; }
.btn-danger { border-color: var(--danger); background: var(--danger); color: #fff; }

/* Cards */
.columns {
  display: grid;
  grid-template-columns: 46fr 95fr;
  gap: 30px;
  align-items: start;
}
.stack { display: flex; flex-direction: column; gap: 30px; min-width: 0; }
.card {
  border-radius: 9px;
  background: #fff;
  box-shadow: 0 3px 6px rgba(0, 0, 0, 0.075);
}
.card-title {
  display: flex;
  align-items: center;
  gap: 10px;
  padding: 16px 18px 16px 19px;
  border-bottom: 1px solid var(--line);
  color: var(--red);
  font-size: 20px;
}
.card-title .icon { color: var(--danger); }
.card-body { padding: 0 25px 25px; }

/* Profile card */
.profile {
  display: flex;
  flex-direction: column;
  align-items: center;
  padding: 30px 25px 45px;
}
.portrait {
  width: 188px;
  height: 188px;
  display: flex;
  align-items: center;
  justify-content: center;
  padding-bottom: 6px;
  border: 1px solid var(--line);
  border-radius: 50%;
  background: #f8f9fa;
  color: var(--muted);
}
.portrait .icon { width: 70px; height: 70px; }
.profile-name {
  margin-top: 20px;
  color: var(--red);
  font-size: 35px;
  line-height: 42px;
}
.profile-role {
  margin: 5px 0 20px;
  color: var(--muted);
  font-size: 25px;
  font-weight: bold;
}
.tags { display: flex; gap: 10px; }
.tag {
  padding: 0 9px;
  border-radius: 7px;
  color: #fff;
  font-size: 15px;
  line-height: 25px;
}
.tag-warning { background: #ffc107; }
.tag-secondary { background: #6c757d; }
.facts {
  margin-top: 20px;
  display: flex;
  font-weight: bold;
  line-height: 26px;
  text-align: center;
}
.facts div { padding: 0 20px 2px; }
.facts div + div { border-left: 1px solid var(--line); }
.facts dt { color: var(--red); }
.contact-actions {
  display: flex;
  padding: 19px 4px 19px 2px;
  border-top: 1px solid var(--line);
}
.contact-actions a {
  flex: 1 1 0;
  display: flex;
  flex-direction: column;
  align-items: center;
  gap: 6px;
  padding-top: 4px;
  font-size: 17px;
  line-height: 26px;
}
.contact-actions a + a { border-left: 1px solid var(--line); }
.contact-actions .icon { color: var(--danger); }

/* Quick stats */
.stats {
  display: grid;
  grid-template-columns: 1fr 1fr;
  gap: 10px;
}
.stat {
  padding: 19px 10px 21px;
  border: 1px solid var(--line);
  border-radius: 7px;
  text-align: center;
}
.stat h3 {
  margin-bottom: 4px;
  color: var(--muted);
  font-size: 20px;
  line-height: 24px;
}
.stat p { font-size: 30px; font-weight: bold; line-height: 36px; }
.text-danger { color: var(--danger); }
.text-success { color: #198754; }
.text-warning { color: #ffc107; }
.text-info { color: #0dcaf0; }

/* Emergency contact */
.contacts { display: flex; flex-direction: column; gap: 20px; }
.contact { display: flex; align-items: center; gap: 20px; }
.contact-icon {
  width: 60px;
  height: 70px;
  display: flex;
  align-items: center;
  justify-content: center;
  border-radius: 50%;
  background: #f8f9fa;
  color: var(--danger);
}
.contact-text { padding-bottom: 3px; }
.contact-text h3 {
  margin-bottom: 1px;
  color: var(--red);
  font-size: 20px;
  line-height: 27px;
}
.contact-text p { color: var(--muted); font-size: 17px; line-height: 26px; }

/* Detail fields */
.fields {
  display: grid;
  grid-template-columns: 1fr 1fr;
  column-gap: 30px;
}
.fields div { padding: 3px 0 20px; }
.fields .wide { grid-column: 1 / -1; }
.fields dt {
  margin-bottom: 5px;
  color: var(--muted);
  font-size: 17px;
  line-height: 26px;
}
.fields dd { font-weight: bold; }

/* Tabs and history table */
.tabs { display: flex; border-bottom: 2px solid var(--line); }
.tab {
  margin-bottom: -1px;
  padding: 20px 30px;
  border: 0;
  border-bottom: 3px solid transparent;
  background: none;
  color: #495057;
  cursor: pointer;
}
.tab.active { border-bottom-color: var(--red); color: var(--red); font-weight: bold; }
.tab-panel { padding: 19px 20px 20px; }
.history {
  width: 100%;
  margin-bottom: 20px;
  border-collapse: collapse;
  color: #000;
  font-size: 17px;
  line-height: 27px;
  text-align: left;
}
.history th, .history td { padding: 5px; border-bottom: 1px solid var(--line); }
.history th {
  color: #6c757d;
  font-size: 16px;
  font-weight: normal;
  line-height: 23px;
}

/* Footer */
.footer {
  padding: 25px 20px 24px;
  border-top: 1px solid #cddfff;
  color: var(--navy);
  text-align: center;
}
.copyright { margin-bottom: 6px; font-size: 17px; line-height: 27px; }
.credits { font-size: 16px; line-height: 26px; }

.back-to-top {
  position: fixed;
  right: 25px;
  bottom: 26px;
  z-index: 3;
  width: 63px;
  height: 63px;
  display: flex;
  align-items: center;
  justify-content: center;
  border: 3px solid #fff;
  border-radius: 50%;
  background: var(--red);
  box-shadow: 0 0 0 2px rgba(244, 0, 9, 0.4), 0 5px 15px rgba(244, 0, 9, 0.3);
  color: #fff;
}
.back-to-top .icon { width: 30px; height: 30px; }
```
